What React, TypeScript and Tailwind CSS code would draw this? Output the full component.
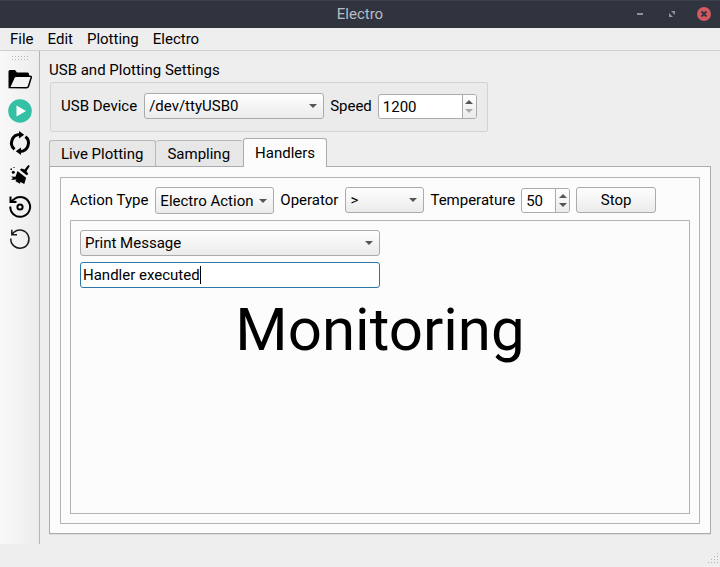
import { useState, type ReactNode } from "react";

const face =
  "rounded-[3px] border border-[#ababab] bg-linear-to-b from-[#fefefe] to-[#ebebeb] text-black";

function Combo({
  id,
  options,
  className,
}: {
  id: string;
  options: string[];
  className: string;
}) {
  return (
    <div className={`relative shrink-0 ${className}`}>
      <select
        id={id}
        aria-label={id}
        className={`h-full w-full appearance-none pr-5 pl-1 outline-none ${face}`}
      >
        {options.map((o) => (
          <option key={o}>{o}</option>
        ))}
      </select>
      <svg
        className="pointer-events-none absolute top-1/2 right-[7px] -mt-0.5 h-1 w-2"
        viewBox="0 0 8 4"
      >
        <path d="M0 0h8L4 4z" fill="#555" />
      </svg>
    </div>
  );
}

function Spin({
  id,
  initial,
  step,
  atMinimum,
  className,
}: {
  id: string;
  initial: number;
  step: number;
  atMinimum?: boolean;
  className: string;
}) {
  const [value, setValue] = useState(initial);
  return (
    <div
      className={`flex h-[25px] shrink-0 overflow-hidden rounded-[3px] border border-[#ababab] bg-white ${className}`}
    >
      <input
        id={id}
        value={value}
        onChange={(e) => setValue(Number(e.target.value) || 0)}
        className="w-0 min-w-0 flex-1 pl-1 outline-none"
      />
      <div className="flex w-3.5 flex-col border-l border-[#ababab] bg-linear-to-b from-[#fefefe] to-[#ebebeb]">
        <button
          aria-label="Increase"
          onClick={() => setValue(value + step)}
          className="flex flex-1 items-center justify-center pt-0.5"
        >
          <svg className="h-1 w-2" viewBox="0 0 8 4">
            <path d="M0 4h8L4 0z" fill="#555" />
          </svg>
        </button>
        <button
          aria-label="Decrease"
          onClick={() => setValue(value - step)}
          className="flex flex-1 items-center justify-center pb-0.5"
        >
          <svg className="h-1 w-2" viewBox="0 0 8 4">
            <path d="M0 0h8L4 4z" fill={atMinimum ? "#aaa" : "#555"} />
          </svg>
        </button>
      </div>
    </div>
  );
}

function Tool({ label, children }: { label: string; children: ReactNode }) {
  return (
    <button aria-label={label} className="size-6">
      <svg viewBox="0 0 24 24" className="size-6">
        {children}
      </svg>
    </button>
  );
}

function Tab({
  label,
  active,
  first,
}: {
  label: string;
  active?: boolean;
  first?: boolean;
}) {
  return (
    <button
      role="tab"
      aria-selected={!!active}
      className={
        active
          ? "-mb-px h-[29px] rounded-t-[3px] border border-b-0 border-[#ababab] bg-[#fcfcfc] px-[11px]"
          : `h-[26px] rounded-t-[3px] border-t border-[#b9b9b9] bg-[#e7e7e7] pr-3 pl-[11px] ${
              first ? "border-x" : "border-r border-r-transparent"
            }`
      }
    >
      {label}
    </button>
  );
}

const gripDots = [0, 3, 6, 9, 12, 15];

export default function App() {
  return (
    <div className="flex min-h-screen flex-col bg-[#eee] font-['Roboto','Liberation_Sans',sans-serif] text-[15px] leading-5 text-black">
      <header className="grid h-7 grid-cols-[1fr_auto_1fr] items-center bg-[#2f343f] text-[#b8bcc6] shadow-[inset_0_1px_0_#3b404c]">
        <span />
        <h1>Electro</h1>
        <div className="flex items-center justify-end gap-[18px] pr-[9px]">
          <button aria-label="Minimize" className="size-3.5">
            <svg viewBox="0 0 14 14" className="size-3.5">
              <path d="M4 6h6v2H4z" fill="#90949e" />
            </svg>
          </button>
          <button aria-label="Maximize" className="size-3.5">
            <svg viewBox="0 0 14 14" className="size-3.5">
              <path d="M6 4h4v4zM4 6v4h4z" fill="#90949e" />
            </svg>
          </button>
          <button aria-label="Close" className="size-3.5">
            <svg viewBox="0 0 14 14" className="size-3.5">
              <circle cx="7" cy="7" r="7" fill="#d25a60" />
              <path d="M4.5 4.5l5 5m0-5l-5 5" stroke="#2f343f" strokeWidth="1.8" />
            </svg>
          </button>
        </div>
      </header>

      <nav className="flex h-[23px] items-center gap-3.5 border-b border-[#cfcfcf] pl-2.5">
        <button>File</button>
        <button>Edit</button>
        <button>Plotting</button>
        <button>Electro</button>
      </nav>

      <div className="flex flex-1">
        <aside className="flex w-10 shrink-0 flex-col items-center gap-2 border-r border-[#b4b4b4] bg-linear-to-r from-[#f9f9f9] to-[#ececec] pt-[5px]">
          <svg className="-mb-1 h-[7px] w-4" viewBox="0 0 16 7">
            {gripDots.map((x) => (
              <path key={x} d={`M${x} 0h1v1h-1zM${x} 3h1v1h-1z`} fill="#b4b4b4" />
            ))}
          </svg>
          <Tool label="Open">
            <path d="M.5 20.500V4.500q0-1.500 1.500-1.500h5l2 2.500h10.500q1.500 0 1.500 1.500v3z" />
            <path
              d="M1.500 20.500 6 10.500q.5-1.200 2-1.200h14.200q1.500 0 1 1.300l-2.600 8.400q-.5 1.700-2.200 1.700z"
              fill="#f4f4f4"
              stroke="#000"
              strokeWidth="1.500"
            />
          </Tool>
          <Tool label="Start">
            <circle cx="12" cy="12" r="11.800" fill="#35bfa4" />
            <path d="M8.500 6.500v11l9.500-5.500z" fill="#fff" />
          </Tool>
          <Tool label="Refresh">
            <g fill="none" stroke="#000" strokeWidth="3">
              <path d="M6.500 18.400A8.400 8.400 0 0 1 12 3.600" />
              <path d="M17.500 5.600A8.400 8.400 0 0 1 12 20.400" />
            </g>
            <path d="M11 0 16.200 3.800 11 7.600zM13 16.400 7.800 20.200l5.200 3.800z" />
          </Tool>
          <Tool label="Clean">
            <path d="M20.300 2 21.800 3l-3.300 5.200 1.800 2.800-1.600 1.200-6.900-5.400 1.800-1.200 3 1zM9.500 8l8.600 6.800-1.800 6.200-3.900-2-.4 1.800-4.500-2.600.8-1.800-5.300.6 2-2-2-1.500 4.500.2z" />
            <circle cx="5.300" cy="9.300" r="1.500" />
            <path d="M2.500 5.500H4V7H2.500zM5.500 4h1v1h-1z" />
          </Tool>
          <Tool label="Restore">
            <path
              d="M2.300 11.500A9.900 9.900 0 1 0 6 4.200L3.500 6"
              fill="none"
              stroke="#000"
              strokeWidth="2"
            />
            <path d="M1.500 1.500h2v4l5 .5v2h-7z" />
            <circle cx="12" cy="12" r="2.600" fill="none" stroke="#000" strokeWidth="2" />
          </Tool>
          <Tool label="Reset">
            <path
              d="M2.800 11.500a9.100 9.100 0 1 0 3.300-6.400L4 7.500M3.800 2.800V7.700H9"
              fill="none"
              stroke="#1c1c1c"
              strokeWidth="1.500"
            />
          </Tool>
        </aside>

        <main className="flex min-w-0 flex-1 flex-col pt-[9px] pr-[9px] pb-2.5 pl-[9px]">
          <h2>USB and Plotting Settings</h2>
          <section className="mt-0.5 ml-px flex h-[50px] items-end gap-1.5 self-start rounded-xs border border-[#d3d3d3] bg-[#ebebeb] px-2.5 pb-3">
            <label htmlFor="device" className="py-[3px] pr-px">USB Device</label>
            <Combo
              id="device"
              options={["/dev/ttyUSB0"]}
              className="h-[26px] w-[180px]"
            />
            <label htmlFor="speed" className="py-[3px]">Speed</label>
            <Spin id="speed" initial={1200} step={100} atMinimum className="w-[99px]" />
          </section>

          <div role="tablist" className="relative mt-1.5 flex h-7 items-end">
            <Tab label="Live Plotting" first />
            <Tab label="Sampling" />
            <Tab label="Handlers" active />
          </div>
          <section className="flex flex-1 flex-col border border-[#ababab] bg-[#fcfcfc] px-2.5 pt-2.5 pb-[9px] shadow-[0_1px_0_#dedede]">
            <div className="flex flex-1 flex-col border border-[#b4b4b4] p-[9px]">
              <div className="flex h-[33px] items-start gap-1.5">
                <label htmlFor="action" className="py-[3px] pr-px">Action Type</label>
                <Combo
                  id="action"
                  options={["Electro Action"]}
                  className="h-[27px] w-[119px]"
                />
                <label htmlFor="operator" className="py-[3px] pr-px">Operator</label>
                <Combo
                  id="operator"
                  options={[">", "<", "="]}
                  className="h-[26px] w-[79px]"
                />
                <label htmlFor="temperature" className="py-[3px]">Temperature</label>
                <div className="pt-px">
                  <Spin id="temperature" initial={50} step={1} className="w-[49px]" />
                </div>
                <button className={`h-[26px] w-20 shrink-0 ${face}`}>Stop</button>
              </div>
              <div className="flex flex-1 flex-col border border-[#b4b4b4] p-[9px]">
                <Combo
                  id="handler"
                  options={["Print Message"]}
                  className="h-[26px] w-[300px]"
                />
                <div className="relative mt-1.5 w-[300px]">
                  <input
                    aria-label="Message"
                    defaultValue="Handler executed"
                    className="h-[26px] w-full rounded-[3px] border border-[#2a76a8] bg-white px-0.5 outline-none"
                  />
                  <span className="absolute top-1 left-[120px] h-[18px] w-px bg-black" />
                </div>
                <p className="mt-2 text-center text-[60px] leading-[68px]">Monitoring</p>
              </div>
            </div>
          </section>
        </main>
      </div>

      <footer className="flex h-[23px] items-end justify-end pb-0.5">
        <svg className="size-3" viewBox="0 0 12 12" fill="#b4b4b4">
          <path d="M9 0h1v1H9zM6 3h1v1H6zM9 3h1v1H9zM3 6h1v1H3zM6 6h1v1H6zM9 6h1v1H9zM0 9h1v1H0zM3 9h1v1H3zM6 9h1v1H6zM9 9h1v1H9z" />
        </svg>
      </footer>
    </div>
  );
}
